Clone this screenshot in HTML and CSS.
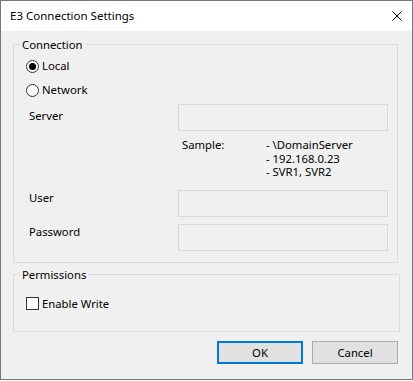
FILE: index.html
```html
<!DOCTYPE html>
<html lang="en">
<head>
    <meta charset="UTF-8">
    <title>E3 Connection Settings</title>
    <link rel="stylesheet" href="styles.css">
</head>
<body>
    <div class="window">
        <div class="titlebar">
            <span class="title">E3 Connection Settings</span>
            <svg class="close" width="10" height="10" viewBox="0 0 10 10">
                <path d="M0.5 0.5 L9.5 9.5 M9.5 0.5 L0.5 9.5" stroke="#000" stroke-width="1" fill="none"/>
            </svg>
        </div>

        <div class="content">
            <fieldset class="group group-connection">
                <legend>Connection</legend>

                <label class="option option-first"><span class="radio checked"></span>Local</label>
                <label class="option option-next"><span class="radio"></span>Network</label>

                <div class="field field-server">
                    <span class="field-label label-server">Server</span>
                    <div class="textbox"></div>
                </div>

                <div class="sample">
                    <span class="sample-label">Sample:</span>
                    <div class="sample-list">
                        <div>- \DomainServer</div>
                        <div>- 192.168.0.23</div>
                        <div>- SVR1, SVR2</div>
                    </div>
                </div>

                <div class="field field-user">
                    <span class="field-label">User</span>
                    <div class="textbox"></div>
                </div>

                <div class="field field-password">
                    <span class="field-label">Password</span>
                    <div class="textbox"></div>
                </div>
            </fieldset>

            <fieldset class="group group-permissions">
                <legend>Permissions</legend>
                <label class="option option-check"><span class="check"></span>Enable Write</label>
            </fieldset>

            <div class="buttons">
                <button class="btn btn-default">OK</button>
                <button class="btn">Cancel</button>
            </div>
        </div>
    </div>
</body>
</html>
```

FILE: styles.css
```css
* { margin: 0; padding: 0; box-sizing: border-box; }
body {
    font-family: "Noto Sans", "Open Sans", sans-serif;
    font-size: 11.3px;
    color: #000;
    background: #fff;
}
.window {
    width: 413px;
    height: 380px;
    border: 1px solid #777;
    background: #f0f0f0;
}
.titlebar {
    height: 30px;
    background: #fff;
    display: flex;
    align-items: center;
    justify-content: space-between;
    padding: 0 10px 0 9px;
    font-size: 11.5px;
}
.title { line-height: 16px; }
.close { display: block; margin-top: -1px; }

.content { padding: 5px 0 0 12px; }

.group {
    border: 1px solid #dcdcdc;
    padding: 0 9px 11px 6px;
    min-inline-size: 0;
}
.group legend {
    padding: 0 2px;
    line-height: 17px;
}
.group-connection { width: 385px; }
.group-permissions {
    width: 387px;
    margin-top: 3px;
    padding-bottom: 19px;
}

.option {
    display: flex;
    align-items: center;
    gap: 3px;
    line-height: 16px;
    margin-left: 6px;
}
.option-first { margin-top: 5px; }
.option-next { margin-top: 8px; }
.option-check { margin-top: 13px; }

.radio {
    width: 13px;
    height: 13px;
    border: 1px solid #333;
    border-radius: 50%;
    background: #fff;
    display: flex;
    align-items: center;
    justify-content: center;
}
.radio.checked::after {
    content: "";
    width: 7px;
    height: 7px;
    border-radius: 50%;
    background: #000;
}
.check {
    width: 13px;
    height: 13px;
    border: 1px solid #333;
    background: #fff;
}

.field {
    display: flex;
    margin-left: 9px;
}
.field-label {
    width: 149px;
    line-height: 16px;
}
.label-server { padding-top: 4px; }
.field-server { margin-top: 6px; }
.field-user { margin-top: 11px; }
.field-password { margin-top: 7px; }
.textbox {
    width: 210px;
    height: 27px;
    border: 1px solid #d9d9d9;
    background: #f0f0f0;
}

.sample {
    display: flex;
    margin: 7px 0 0 162px;
    line-height: 13.5px;
}
.sample-label { width: 84px; }

.buttons {
    display: flex;
    justify-content: flex-end;
    gap: 9px;
    margin-top: 9px;
    padding-right: 14px;
}
.btn {
    width: 86px;
    height: 23px;
    font-family: inherit;
    font-size: 11.3px;
    color: #000;
    background: #e1e1e1;
    border: 1px solid #adadad;
}
.btn-default { border: 2px solid #0078d7; }
```
